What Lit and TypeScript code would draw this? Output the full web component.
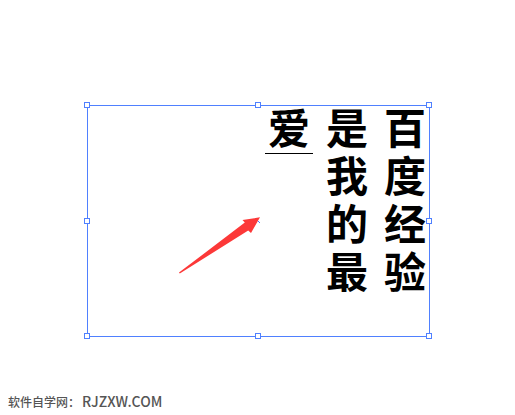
import { LitElement, html, css } from "lit";
import { customElement } from "lit/decorators.js";

const COLUMNS = ["百度经验", "是我的最", "爱"];
const HANDLES = ["nw", "n", "ne", "w", "e", "sw", "s", "se"];

@customElement("app-root")
export class AppRoot extends LitElement {
  static styles = css`
    :host {
      display: flex;
      flex-direction: column;
      justify-content: space-between;
      box-sizing: border-box;
      min-height: 100vh;
      padding: 105px 0 3px;
      background: #fff;
      color: #000;
      font-family: "Noto Sans CJK SC", sans-serif;
    }
    .frame {
      position: relative;
      box-sizing: border-box;
      min-height: 232px;
      margin: 0 85px 0 87px;
      border: 1px solid #4f80ff;
    }
    .text {
      display: flex;
      flex-direction: row-reverse;
      align-items: flex-start;
      gap: 10px;
      margin: -1px 0 0;
    }
    .column {
      display: flex;
      flex-direction: column;
      width: 48px;
      text-align: center;
      font-size: 42px;
      font-weight: 700;
      line-height: 42px;
    }
    .column:last-child {
      border-bottom: 1px solid #000;
    }
    .glyph {
      height: 48px;
    }
    .handle {
      position: absolute;
      box-sizing: border-box;
      width: 6px;
      height: 6px;
      border: 1px solid #4f80ff;
      background: #fff;
      translate: -50% -50%;
      left: round(down, 50%, 1px);
      top: round(down, 50%, 1px);
    }
    .nw, .w, .sw { left: -1px; }
    .ne, .e, .se { left: 100%; }
    .nw, .n, .ne { top: -1px; }
    .sw, .s, .se { top: 100%; }
    .arrow {
      position: absolute;
      right: calc(50% - 3px);
      top: 110px;
      width: 84px;
      height: 60px;
    }
    .credit {
      display: flex;
      align-items: baseline;
      gap: 2px;
      padding-left: 8px;
      color: #555;
      font-size: 12px;
      font-weight: 500;
      line-height: 20px;
    }
    .site {
      font-size: 14px;
    }
  `;

  render() {
    return html`
      <main class="frame">
        <p class="text">
          ${COLUMNS.map(
            (t) => html`<span class="column"
              >${[...t].map((c) => html`<span class="glyph">${c}</span>`)}</span
            >`
          )}
        </p>
        ${HANDLES.map((h) => html`<span class="handle ${h}"></span>`)}
        <svg class="arrow" viewBox="0 0 84 60" aria-hidden="true">
          <path d="M80 5h1v1h-1zM81 6h1v1h-1z" fill="#4f80ff" />
          <path
            d="M82 1.3 64.5 4l2.3 2.6L1 56.6l.8 1L70.2 14.4l2.8 2.6z"
            fill="#fc3838"
          />
        </svg>
      </main>
      <footer class="credit">
        <span>软件自学网：</span><span class="site">RJZXW.COM</span>
      </footer>
    `;
  }
}
